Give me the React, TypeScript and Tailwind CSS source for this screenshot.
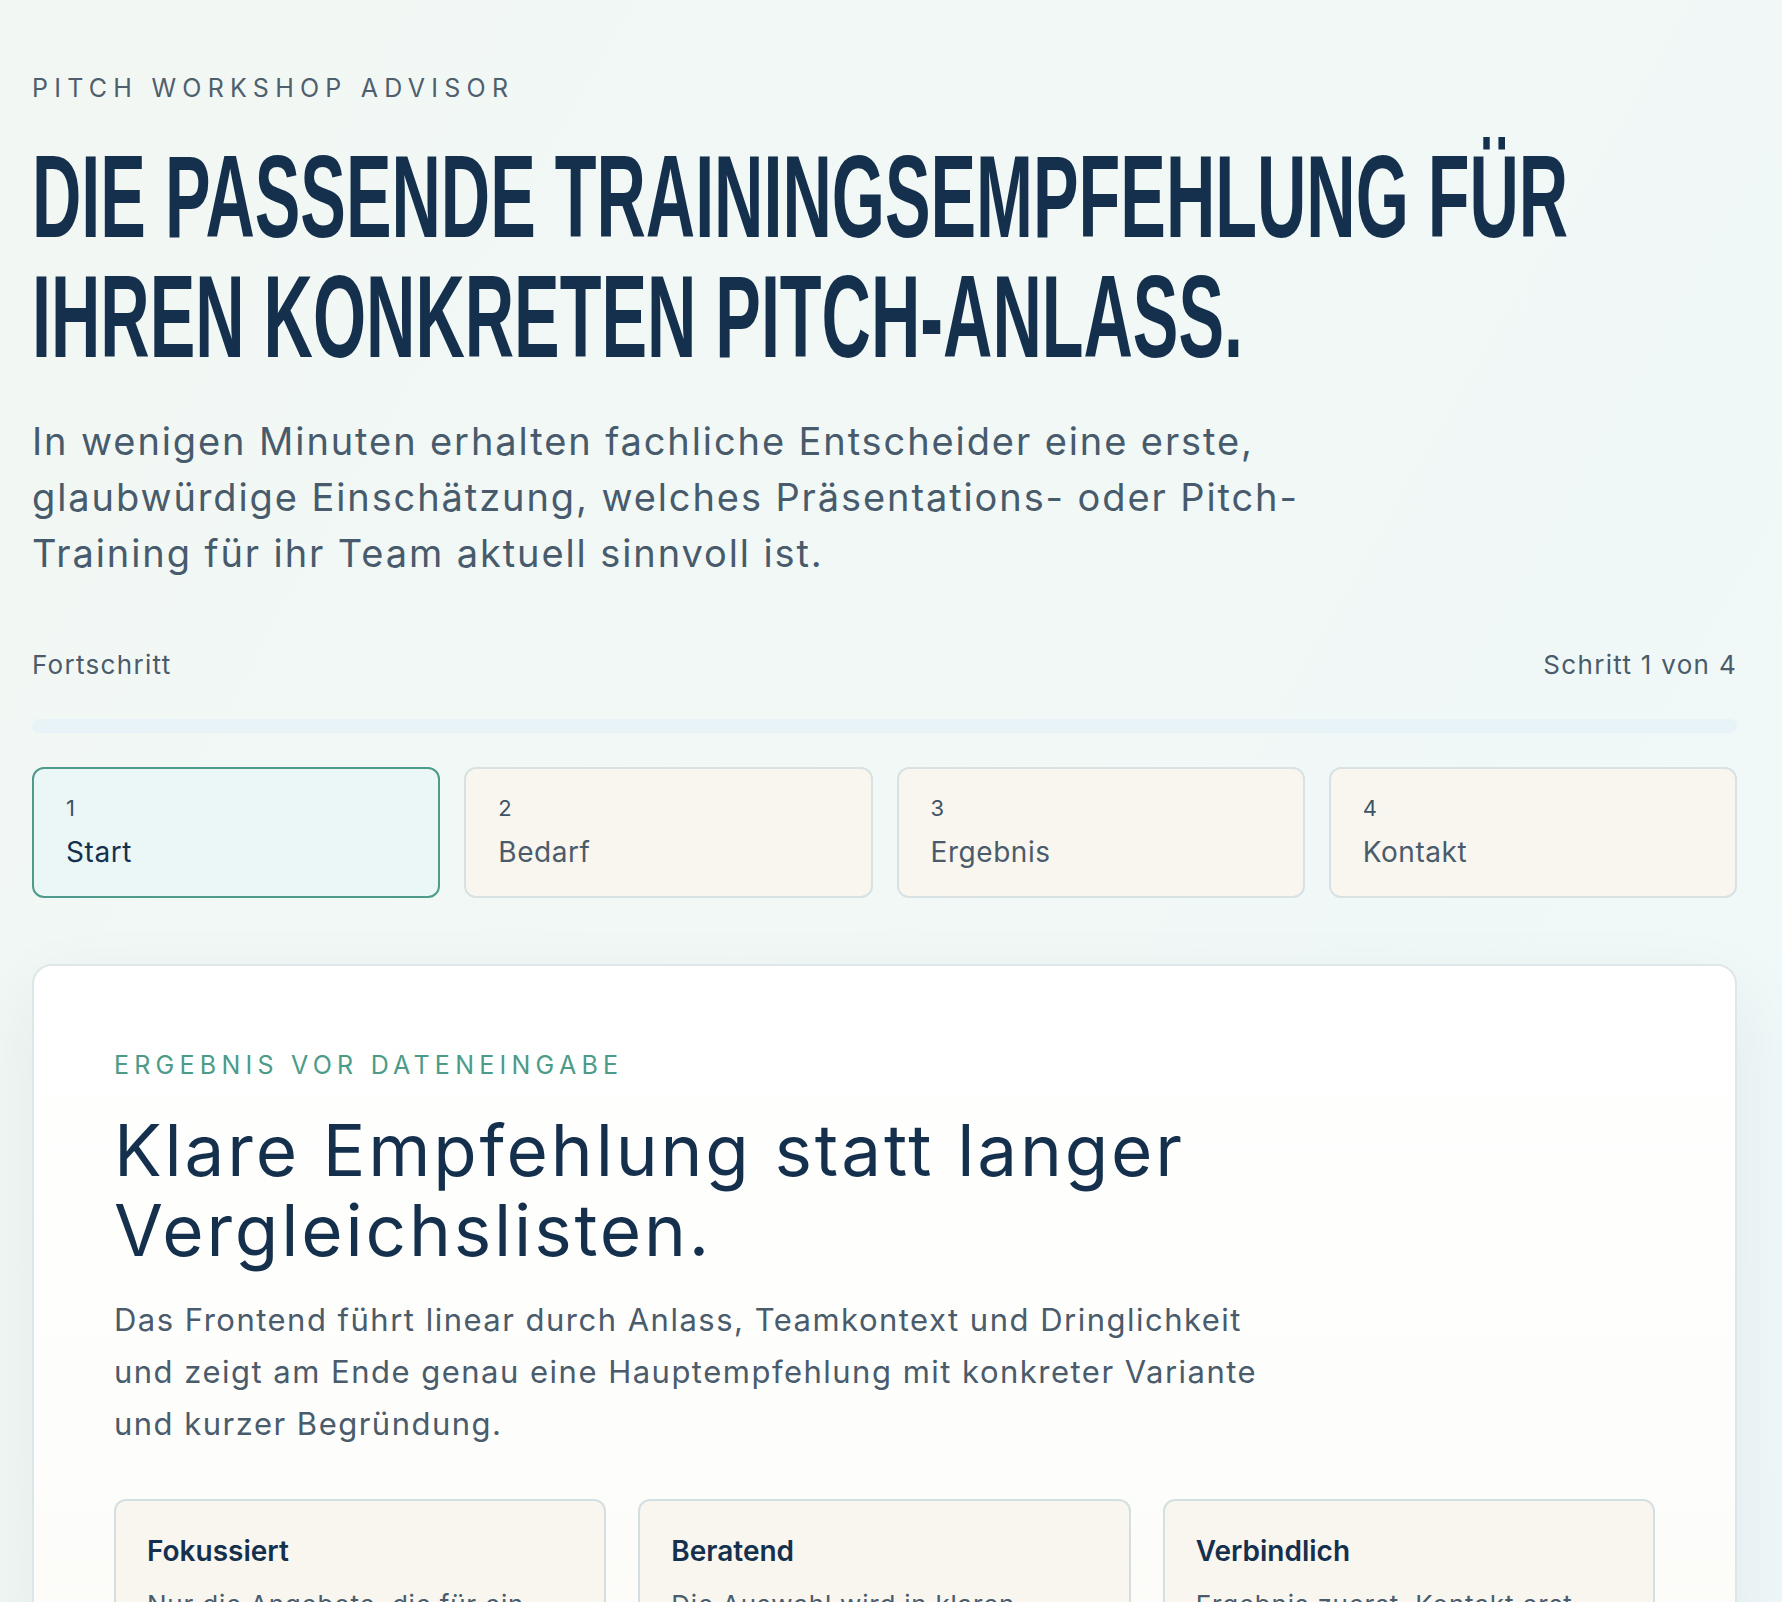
import React from "react";

type Step = {
  number: number;
  label: string;
  active?: boolean;
};

const STEPS: Step[] = [
  { number: 1, label: "Start", active: true },
  { number: 2, label: "Bedarf" },
  { number: 3, label: "Ergebnis" },
  { number: 4, label: "Kontakt" },
];

const FEATURES = [
  {
    title: "Fokussiert",
    text: "Nur die Angebote, die für ein Team wirklich passen.",
  },
  {
    title: "Beratend",
    text: "Die Auswahl wird in klaren Worten begründet.",
  },
  {
    title: "Verbindlich",
    text: "Ergebnis zuerst, Kontakt erst nach Ihrer Entscheidung.",
  },
];

const StepCard: React.FC<{ step: Step }> = ({ step }) => (
  <div
    className={
      step.active
        ? "flex flex-col rounded-xl border-2 border-[#4d9b8b] bg-[#ebf7f6] px-8 pb-[30px] pt-[28px]"
        : "flex flex-col rounded-xl border-2 border-[#d9e2e3] bg-[#f9f6ef] px-8 pb-[30px] pt-[28px]"
    }
  >
    <span className="text-[22px] leading-none text-[#3f5366]">{step.number}</span>
    <span
      className={
        step.active
          ? "mt-[19px] text-[28px] leading-none tracking-[0.02em] text-[#15304d]"
          : "mt-[19px] text-[28px] leading-none tracking-[0.02em] text-[#4a5b6b]"
      }
    >
      {step.label}
    </span>
  </div>
);

export default function App() {
  return (
    <div className="min-h-screen bg-[linear-gradient(120deg,#f2f7f3_0%,#f1f8f6_45%,#eff8f9_100%)] font-['Inter','Noto_Sans',sans-serif]">
      <div className="pl-8 pr-[45px] pt-[76px] pb-24">
        <p className="text-[25px] uppercase leading-none tracking-[0.25em] text-[#4f5f6d]">
          Pitch Workshop Advisor
        </p>

        <h1 className="mt-9 font-['Liberation_Sans','Arial',sans-serif] text-[117px] font-bold uppercase leading-[120px] text-[#15304d]">
          <span className="block origin-left scale-x-[0.584] whitespace-nowrap">
            Die passende Trainingsempfehlung für
          </span>
          <span className="block origin-left scale-x-[0.584] whitespace-nowrap">
            Ihren konkreten Pitch-Anlass.
          </span>
        </h1>

        <p className="mt-9 max-w-[1330px] text-[38px] leading-[56px] tracking-[0.05em] text-[#485b6c]">
          In wenigen Minuten erhalten fachliche Entscheider eine erste,
          <br />
          glaubwürdige Einschätzung, welches Präsentations- oder Pitch-
          <br />
          Training für ihr Team aktuell sinnvoll ist.
        </p>

        <div className="mt-[65px] flex items-center justify-between text-[26px] leading-[37.5px] tracking-[0.05em] text-[#4a5b6b]">
          <span>Fortschritt</span>
          <span>Schritt 1 von 4</span>
        </div>

        <div className="mt-[35px] h-[14px] w-full rounded-full bg-[#e7f3f6]" />

        <div className="mt-[34px] grid grid-cols-4 gap-6">
          {STEPS.map((step) => (
            <StepCard key={step.number} step={step} />
          ))}
        </div>

        <section className="mt-[66px] rounded-[20px] border-2 border-[#dde6e8] bg-[linear-gradient(180deg,#ffffff_0%,#fdfdfb_60%,#fbfaf6_100%)] px-20 pb-20 pt-[87px] shadow-[0_30px_80px_rgba(21,48,77,0.07)]">
          <p className="text-[25px] uppercase leading-none tracking-[0.21em] text-[#4b9b88]">
            Ergebnis vor Dateneingabe
          </p>
          <h2 className="mt-[32px] max-w-[1300px] text-[71px] leading-[80px] tracking-[0.04em] text-[#15304d]">
            Klare Empfehlung statt langer
            <br />
            Vergleichslisten.
          </h2>
          <p className="mt-[24px] max-w-[1300px] text-[31px] leading-[52px] tracking-[0.048em] text-[#4a5b6b]">
            Das Frontend führt linear durch Anlass, Teamkontext und Dringlichkeit
            <br />
            und zeigt am Ende genau eine Hauptempfehlung mit konkreter Variante
            <br />
            und kurzer Begründung.
          </p>

          <div className="mt-[49px] grid grid-cols-3 gap-8">
            {FEATURES.map((feature) => (
              <div
                key={feature.title}
                className="rounded-xl border-2 border-[#d4dfe2] bg-[#f8f6ef] px-[31px] pb-9 pt-9"
              >
                <h3 className="text-[28px] font-semibold leading-none text-[#15304d]">
                  {feature.title}
                </h3>
                <p className="mt-5 text-[26px] leading-[40px] tracking-[0.03em] text-[#4a5b6b]">
                  {feature.text}
                </p>
              </div>
            ))}
          </div>
        </section>
      </div>
    </div>
  );
}
